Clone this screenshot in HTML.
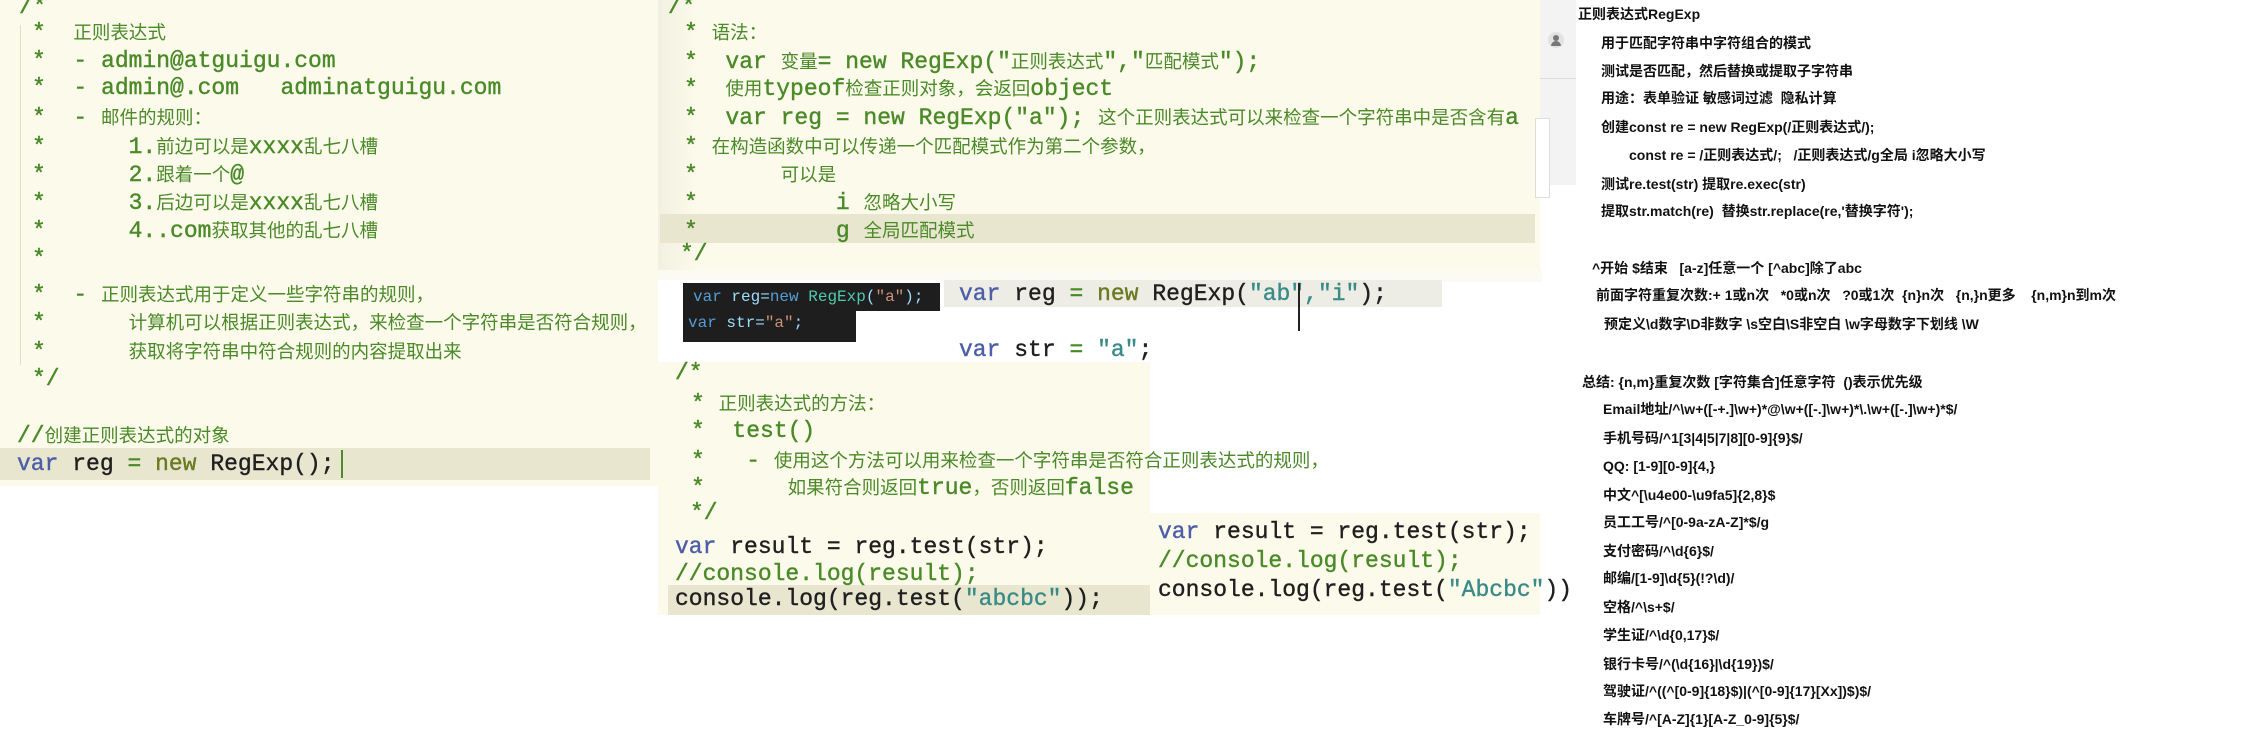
<!DOCTYPE html>
<html><head><meta charset="utf-8">
<style>
*{margin:0;padding:0;box-sizing:border-box}
body{width:2256px;height:738px;background:#fff;position:relative;overflow:hidden;font-family:"Liberation Mono","Noto Sans CJK SC",monospace}
.p{position:absolute;background:#fcfaea}
.l{position:absolute;white-space:pre;font-size:23px;line-height:28px;height:28px;color:#4a8a28;-webkit-text-stroke:0.4px currentColor}
.c{font-family:"Noto Sans CJK SC",sans-serif;font-size:18.5px;-webkit-text-stroke:0}
.k{color:#4c5ea8}.b{color:#1f1f1f}.n{color:#6b7b22}.s{color:#3a8b87}.g{color:#4f8a2b}
.band{position:absolute;background:#e9e6d0}
.r{position:absolute;white-space:pre;font-family:"Liberation Sans","Noto Sans CJK SC",sans-serif;font-weight:bold;font-size:14px;line-height:20px;color:#111}
.d{position:absolute;white-space:pre;font-size:16px;line-height:26px;color:#9cdcfe}
#rt{position:absolute;left:-7px;top:0;width:2256px;height:738px}
</style></head><body>

<div class="p" style="left:0;top:0;width:658px;height:486px"></div>
<div style="position:absolute;left:20px;top:25px;width:1px;height:340px;background:#e0ddc8"></div>
<div class="band" style="left:0;top:448px;width:650px;height:32px"></div>
<div class="p" style="left:10px;top:486px;width:640px;height:128px;background:#fff"></div>
<div class="l" style="left:19px;top:-7px">/*</div>
<div class="l" style="left:32px;top:18px">*  <span class="c">正则表达式</span></div>
<div class="l" style="left:32px;top:47px">*  - admin@atguigu.com</div>
<div class="l" style="left:32px;top:74px">*  - admin@.com   adminatguigu.com</div>
<div class="l" style="left:32px;top:103px">*  - <span class="c">邮件的规则：</span></div>
<div class="l" style="left:32px;top:132px">*      1.<span class="c">前边可以是</span>xxxx<span class="c">乱七八槽</span></div>
<div class="l" style="left:32px;top:160px">*      2.<span class="c">跟着一个</span>@</div>
<div class="l" style="left:32px;top:188px">*      3.<span class="c">后边可以是</span>xxxx<span class="c">乱七八槽</span></div>
<div class="l" style="left:32px;top:216px">*      4..com<span class="c">获取其他的乱七八槽</span></div>
<div class="l" style="left:32px;top:245px">*</div>
<div class="l" style="left:32px;top:280px">*  - <span class="c">正则表达式用于定义一些字符串的规则，</span></div>
<div class="l" style="left:32px;top:308px">*      <span class="c">计算机可以根据正则表达式，来检查一个字符串是否符合规则，</span></div>
<div class="l" style="left:32px;top:337px">*      <span class="c">获取将字符串中符合规则的内容提取出来</span></div>
<div class="l" style="left:32px;top:365px">*/</div>
<div class="l" style="left:17px;top:421px">//<span class="c">创建正则表达式的对象</span></div>
<div class="l" style="left:17px;top:450px"><span class="k">var</span> <span class="b">reg</span> = <span class="n">new</span> <span class="b">RegExp();</span></div>
<div style="position:absolute;left:341px;top:450px;width:2px;height:28px;background:#4f8a2b"></div>

<div class="p" style="left:658px;top:0;width:882px;height:270px;background:linear-gradient(90deg,#f2f0e0,#fcfaea 40px)"></div>
<div class="band" style="left:660px;top:214px;width:875px;height:29px"></div>
<div class="l" style="left:668px;top:-7px">/*</div>
<div class="l" style="left:684px;top:18px">* <span class="c">语法：</span></div>
<div class="l" style="left:684px;top:47px">*  var <span class="c">变量</span>= new RegExp("<span class="c">正则表达式</span>","<span class="c">匹配模式</span>");</div>
<div class="l" style="left:684px;top:74px">*  <span class="c">使用</span>typeof<span class="c">检查正则对象，会返回</span>object</div>
<div class="l" style="left:684px;top:103px">*  var reg = new RegExp("a"); <span class="c">这个正则表达式可以来检查一个字符串中是否含有</span>a</div>
<div class="l" style="left:684px;top:132px">* <span class="c">在构造函数中可以传递一个匹配模式作为第二个参数，</span></div>
<div class="l" style="left:684px;top:160px">*      <span class="c">可以是</span></div>
<div class="l" style="left:684px;top:188px">*          i <span class="c">忽略大小写</span></div>
<div class="l" style="left:684px;top:216px">*          g <span class="c">全局匹配模式</span></div>
<div class="l" style="left:680px;top:240px">*/</div>

<div style="position:absolute;left:658px;top:270px;width:884px;height:12px;background:#fbfaf3"></div>
<div style="position:absolute;left:658px;top:280px;width:290px;height:82px;background:#fff"></div>
<div style="position:absolute;left:683px;top:283px;width:257px;height:28px;background:#1e1e1e"></div>
<div style="position:absolute;left:683px;top:309px;width:173px;height:33px;background:#1e1e1e"></div>
<div class="d" style="left:693px;top:284px"><span style="color:#569cd6">var</span> reg=<span style="color:#569cd6">new</span> <span style="color:#4ec9b0">RegExp</span>(<span style="color:#ce9178">"a"</span>);</div>
<div class="d" style="left:688px;top:310px"><span style="color:#569cd6">var</span> str=<span style="color:#ce9178">"a"</span>;</div>
<div style="position:absolute;left:944px;top:280px;width:498px;height:82px;background:#fff"></div>
<div style="position:absolute;left:944px;top:280px;width:498px;height:27px;background:#eeede5"></div>
<div class="l" style="left:959px;top:280px"><span class="k">var</span> <span class="b">reg</span> = <span class="n">new</span> <span class="b">RegExp(</span><span class="s">"ab","i"</span><span class="b">);</span></div>
<div class="l" style="left:959px;top:336px"><span class="k">var</span> <span class="b">str</span> = <span class="s">"a"</span><span class="b">;</span></div>
<div style="position:absolute;left:1298px;top:283px;width:2px;height:48px;background:#222"></div>

<div class="p" style="left:658px;top:362px;width:492px;height:253px"></div>
<div class="band" style="left:668px;top:585px;width:482px;height:30px"></div>
<div class="l" style="left:675px;top:359px">/*</div>
<div class="l" style="left:691px;top:389px">* <span class="c">正则表达式的方法：</span></div>
<div class="l" style="left:691px;top:417px">*  test()</div>
<div class="l" style="left:691px;top:446px">*   - <span class="c">使用这个方法可以用来检查一个字符串是否符合正则表达式的规则，</span></div>
<div class="l" style="left:691px;top:473px">*      <span class="c">如果符合则返回</span>true<span class="c">，否则返回</span>false</div>
<div class="l" style="left:690px;top:499px">*/</div>
<div class="l" style="left:675px;top:533px"><span class="k">var</span> <span class="b">result = reg.test(str);</span></div>
<div class="l" style="left:675px;top:560px">//console.log(result);</div>
<div class="l" style="left:675px;top:585px"><span class="b">console.log(reg.test(</span><span class="s">"abcbc"</span><span class="b">));</span></div>

<div class="p" style="left:1150px;top:513px;width:390px;height:102px"></div>
<div class="l" style="left:1158px;top:518px"><span class="k">var</span> <span class="b">result = reg.test(str);</span></div>
<div class="l" style="left:1158px;top:547px">//console.log(result);</div>
<div class="l" style="left:1158px;top:576px"><span class="b">console.log(reg.test(</span><span class="s">"Abcbc"</span><span class="b">))</span></div>

<div style="position:absolute;left:1540px;top:0;width:36px;height:185px;background:#f3f3f3"></div>
<div style="position:absolute;left:1540px;top:78px;width:36px;height:1px;background:#ddd"></div>
<div style="position:absolute;left:1548px;top:32px;width:16px;height:16px;border-radius:50%;background:#e2e2e2"></div>
<div style="position:absolute;left:1553px;top:35px;width:6px;height:6px;border-radius:50%;background:#777"></div>
<div style="position:absolute;left:1551px;top:41px;width:10px;height:5px;border-radius:5px 5px 0 0;background:#777"></div>
<div style="position:absolute;left:1535px;top:118px;width:15px;height:80px;background:#fff;border:1px solid #ddd"></div>

<div id="rt">
<div class="r" style="left:1585px;top:4px">正则表达式RegExp</div>
<div class="r" style="left:1608px;top:33px">用于匹配字符串中字符组合的模式</div>
<div class="r" style="left:1608px;top:61px">测试是否匹配，然后替换或提取子字符串</div>
<div class="r" style="left:1608px;top:88px">用途：表单验证 敏感词过滤  隐私计算</div>
<div class="r" style="left:1608px;top:117px">创建const re = new RegExp(/正则表达式/);</div>
<div class="r" style="left:1636px;top:145px">const re = /正则表达式/;   /正则表达式/g全局 i忽略大小写</div>
<div class="r" style="left:1608px;top:174px">测试re.test(str) 提取re.exec(str)</div>
<div class="r" style="left:1608px;top:201px">提取str.match(re)  替换str.replace(re,'替换字符');</div>
<div class="r" style="left:1599px;top:258px">^开始 $结束   [a-z]任意一个 [^abc]除了abc</div>
<div class="r" style="left:1603px;top:285px">前面字符重复次数:+ 1或n次   *0或n次   ?0或1次  {n}n次   {n,}n更多    {n,m}n到m次</div>
<div class="r" style="left:1611px;top:314px">预定义\d数字\D非数字 \s空白\S非空白 \w字母数字下划线 \W</div>
<div class="r" style="left:1589px;top:372px">总结: {n,m}重复次数 [字符集合]任意字符  ()表示优先级</div>
<div class="r" style="left:1610px;top:399px">Email地址/^\w+([-+.]\w+)*@\w+([-.]\w+)*\.\w+([-.]\w+)*$/</div>
<div class="r" style="left:1610px;top:428px">手机号码/^1[3|4|5|7|8][0-9]{9}$/</div>
<div class="r" style="left:1610px;top:456px">QQ: [1-9][0-9]{4,}</div>
<div class="r" style="left:1610px;top:485px">中文^[\u4e00-\u9fa5]{2,8}$</div>
<div class="r" style="left:1610px;top:512px">员工工号/^[0-9a-zA-Z]*$/g</div>
<div class="r" style="left:1610px;top:541px">支付密码/^\d{6}$/</div>
<div class="r" style="left:1610px;top:568px">邮编/[1-9]\d{5}(!?\d)/</div>
<div class="r" style="left:1610px;top:597px">空格/^\s+$/</div>
<div class="r" style="left:1610px;top:625px">学生证/^\d{0,17}$/</div>
<div class="r" style="left:1610px;top:654px">银行卡号/^(\d{16}|\d{19})$/</div>
<div class="r" style="left:1610px;top:681px">驾驶证/^((^[0-9]{18}$)|(^[0-9]{17}[Xx])$)$/</div>
<div class="r" style="left:1610px;top:709px">车牌号/^[A-Z]{1}[A-Z_0-9]{5}$/</div>
</div>
</body></html>
